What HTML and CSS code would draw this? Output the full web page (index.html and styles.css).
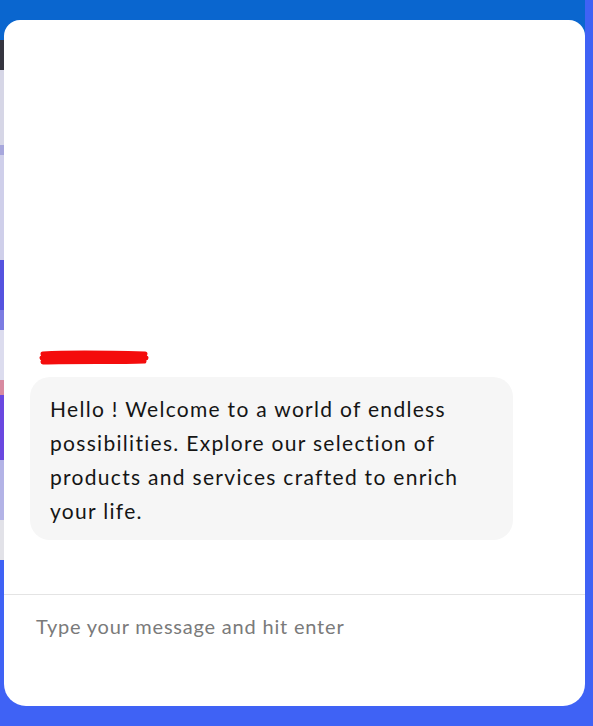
FILE: index.html
```html
<!DOCTYPE html>
<html lang="en">
<head>
<meta charset="utf-8">
<title>Chat</title>
<link rel="stylesheet" href="styles.css">
</head>
<body>
<div class="screen">
  <div class="card">
    <div class="messages">
      <div class="sender" aria-label="redacted name">
        <svg class="scribble" width="112" height="20" viewBox="0 0 112 20">
          <path d="M5 5 C35 3 75 4 107 5 M4 9 C40 8 80 8 108 9 M5 13 C40 12 80 13 106 12" stroke="#f40c0c" stroke-width="5" stroke-linecap="round" fill="none"/>
        </svg>
      </div>
      <div class="bubble">Hello ! Welcome to a world of endless possibilities. Explore our selection of products and services crafted to enrich your life.</div>
    </div>
    <div class="composer">
      <div class="placeholder">Type your message and hit enter</div>
    </div>
  </div>
</div>
</body>
</html>
```

FILE: styles.css
```css
html, body {
  margin: 0;
  padding: 0;
}
body {
  width: 593px;
  height: 726px;
  overflow: hidden;
  font-family: Lato, "Noto Sans", sans-serif;
}
.screen {
  box-sizing: border-box;
  width: 593px;
  height: 726px;
  padding: 20px 8px 20px 4px;
  display: flex;
  background:
    linear-gradient(#0a66cf, #0a66cf) no-repeat 0 0 / 585px 40px,
    linear-gradient(to bottom,
      #6b70ef 0, #6b70ef 20px,
      #e4e4ef 20px, #e4e4ef 40px,
      #35353f 40px, #35353f 70px,
      #d6d6e6 70px, #d6d6e6 145px,
      #a7a7dc 145px, #a7a7dc 155px,
      #cfcfea 155px, #cfcfea 260px,
      #5553df 260px, #5553df 310px,
      #7c7ce2 310px, #7c7ce2 330px,
      #dcdcee 330px, #dcdcee 380px,
      #d88aa0 380px, #d88aa0 395px,
      #6a48e0 395px, #6a48e0 460px,
      #b3b3e6 460px, #b3b3e6 520px,
      #e2e2e8 520px, #e2e2e8 560px,
      #3f62f5 560px) no-repeat 0 0 / 4px 726px,
    #3f62f5;
}
.card {
  flex: 1;
  display: flex;
  flex-direction: column;
  background: #ffffff;
  border-radius: 16px 16px 22px 22px;
  overflow: hidden;
}
.messages {
  flex: 1;
  display: flex;
  flex-direction: column;
  justify-content: flex-end;
  align-items: flex-start;
  padding: 0 26px 54px 26px;
  border-bottom: 1px solid #e4e4e4;
}
.sender {
  margin: 0 0 8px 8px;
  height: 20px;
}
.scribble {
  display: block;
}
.bubble {
  box-sizing: border-box;
  width: 483px;
  padding: 15px 20px 12px 20px;
  background: #f6f6f6;
  border-radius: 20px;
  font-size: 21px;
  letter-spacing: 1.3px;
  line-height: 34px;
  color: #151515;
}
.composer {
  height: 111px;
  box-sizing: border-box;
  padding: 18px 32px 0 32px;
}
.placeholder {
  font-size: 20px;
  letter-spacing: 0.8px;
  line-height: 26px;
  color: #7a7a7a;
}
```
